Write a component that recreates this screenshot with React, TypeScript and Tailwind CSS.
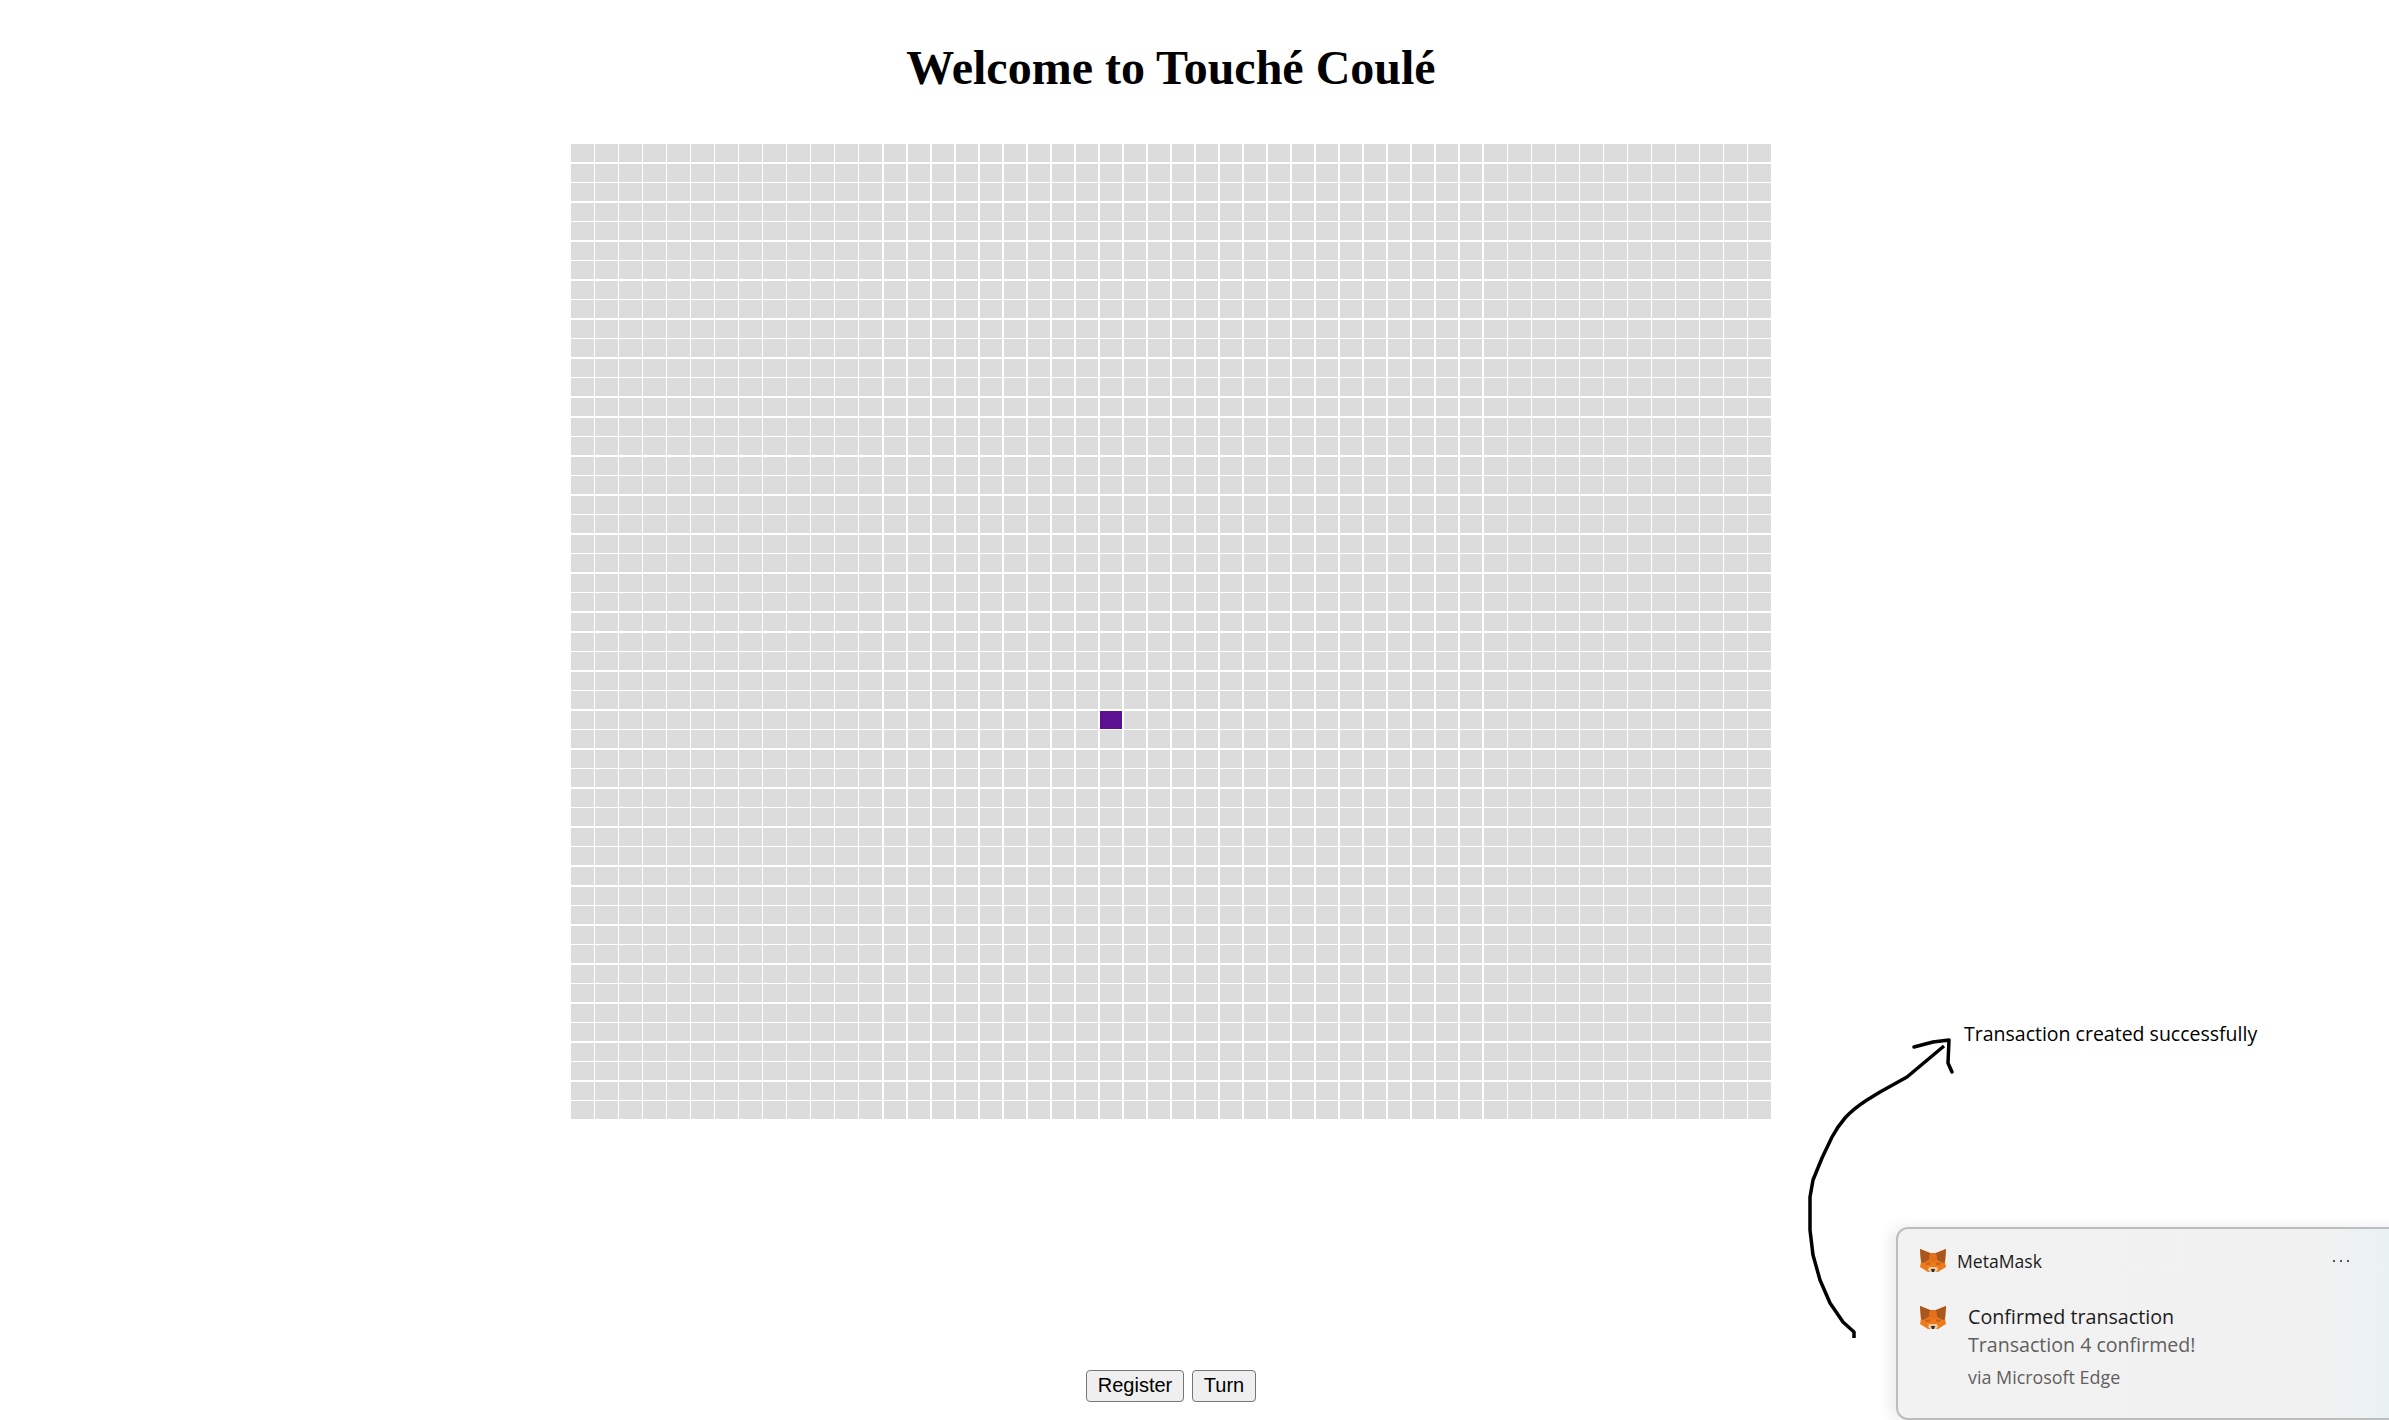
const cells = Array.from({ length: 2500 }, (_, i) => i);
const purpleCell = 29 * 50 + 22;

function Fox({ className }: { className?: string }) {
  return (
    <svg viewBox="0 0 26 24" className={className}>
      <polygon points="0,0 10,4 16,4 26,0 25,13 26,18 18,23 8,23 0,18 1,13" fill="#ef7a1a" />
      <polygon points="0,0 10,4 9,11 3,14 1,13" fill="#a9561f" />
      <polygon points="26,0 16,4 17,11 23,14 25,13" fill="#a9561f" />
      <polygon points="10,4 16,4 17,11 13,14 9,11" fill="#e2701c" />
      <polygon points="5,14 10,13 10,16 6,16" fill="#c9651f" />
      <polygon points="21,14 16,13 16,16 20,16" fill="#c9651f" />
      <polygon points="9,18 17,18 18,21 16,23 10,23 8,21" fill="#e8c9a8" />
      <polygon points="11,20 15,20 14,23 12,23" fill="#33261c" />
    </svg>
  );
}

export default function App() {
  return (
    <div className="relative h-[1420px] w-[2389px] overflow-hidden bg-white">
      <div className="flex w-[2342px] flex-col items-center pt-[44px]">
        <h1 className="text-[48px] leading-[48px] font-bold text-black font-['Liberation_Serif',serif]">
          Welcome to Touché Coulé
        </h1>
        <div className="mt-[52px] grid h-[976px] w-[1200px] grid-cols-[repeat(50,1fr)] grid-rows-[repeat(50,1fr)] gap-px">
          {cells.map((i) => (
            <div
              key={i}
              className={
                i === purpleCell
                  ? "h-[18px] w-[22.5px] justify-self-center bg-[#5b1190]"
                  : "h-[18px] w-[22.5px] justify-self-center bg-[#dcdcdc]"
              }
            />
          ))}
        </div>
        <div className="mt-[250px] flex gap-2 font-['Liberation_Sans',sans-serif] text-[20px] leading-none text-black">
          <button className="h-8 w-[98px] rounded-[4px] border border-[#767676] bg-[#efefef] pb-[2px]">Register</button>
          <button className="h-8 w-16 rounded-[4px] border border-[#767676] bg-[#efefef] pb-[2px]">Turn</button>
        </div>
      </div>

      {/* hand drawn annotation */}
      <svg className="absolute top-0 left-0 h-[1420px] w-[2389px]" viewBox="0 0 2389 1420" fill="none">
        <path
          d="M1944 1046 L1907 1077 L1880 1092 L1867 1100 Q1853 1109 1845 1118 Q1838 1126 1832 1137 L1822 1158 L1813 1180 L1810 1197 L1810 1230 L1813 1255 L1820 1280 L1830 1303 L1843 1322 L1854 1332 L1854 1338"
          stroke="#000"
          strokeWidth="3.5"
          strokeLinejoin="round"
        />
        <path
          d="M1914 1047 L1933 1042 L1949 1040 L1948 1063 L1952 1072"
          stroke="#000"
          strokeWidth="3.5"
          strokeLinejoin="round"
          strokeLinecap="round"
        />
      </svg>
      <div className="absolute top-[1021px] left-[1964px] font-['Open_Sans',sans-serif] text-[19.5px] leading-[26px] whitespace-nowrap text-black">
        Transaction created successfully
      </div>

      {/* windows toast */}
      <div className="absolute top-[1227px] left-[1896px] h-[193px] w-[520px] rounded-[12px] border-2 border-[#bdbdbd] bg-gradient-to-r from-[#f2f2f2] via-[#f1f1f1] via-80% to-[#e8f2f5] font-['Open_Sans',sans-serif] shadow-[-6px_0_14px_rgba(0,0,0,0.08)]">
        <div className="flex h-[64px] items-center pl-[22px]">
          <Fox className="h-6 w-[26px]" />
          <span className="ml-[11px] text-[17.6px] text-[#1b1b1b]">MetaMask</span>
          <span className="ml-[291px] flex gap-[5px]">
            <i className="h-[2px] w-[2px] bg-[#555]" />
            <i className="h-[2px] w-[2px] bg-[#555]" />
            <i className="h-[2px] w-[2px] bg-[#555]" />
          </span>
        </div>
        <div className="flex pl-[22px]">
          <Fox className="mt-[13px] h-6 w-[26px]" />
          <div className="ml-[22px] flex flex-col pt-[10px]">
            <span className="text-[19.7px] leading-[28px] text-[#1b1b1b]">Confirmed transaction</span>
            <span className="text-[19.6px] leading-[28px] text-[#5f5f5f]">Transaction 4 confirmed!</span>
            <span className="mt-[5px] text-[17.9px] leading-[26px] text-[#5f5f5f]">via Microsoft Edge</span>
          </div>
        </div>
      </div>
    </div>
  );
}
